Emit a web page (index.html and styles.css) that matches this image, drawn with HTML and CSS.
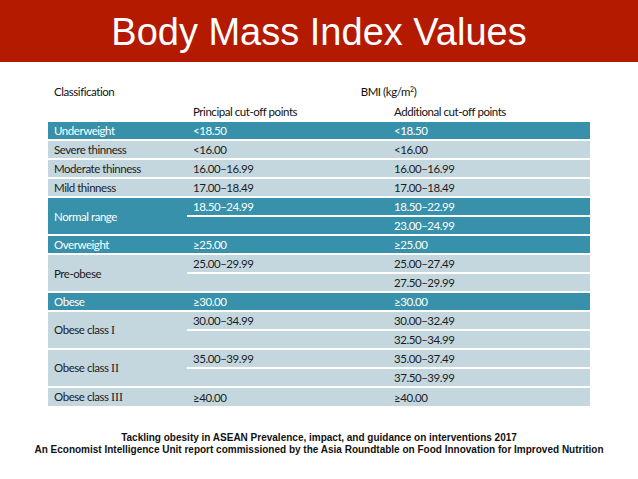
FILE: index.html
```html
<!DOCTYPE html>
<html lang="en">
<head>
<meta charset="utf-8">
<title>Body Mass Index Values</title>
<link rel="stylesheet" href="styles.css">
</head>
<body>
<header class="banner">
  <h1 class="title">Body Mass Index Values</h1>
</header>
<main class="content">
  <table class="bmi">
    <colgroup>
      <col class="c1"><col class="c2"><col class="c3">
    </colgroup>
    <thead>
      <tr class="h1">
        <th class="left">Classification</th>
        <th class="center" colspan="2">BMI (kg/m<sup>2</sup>)</th>
      </tr>
      <tr class="h2">
        <th></th>
        <th class="left">Principal cut-off points</th>
        <th class="left">Additional cut-off points</th>
      </tr>
    </thead>
    <tbody>
      <tr class="dark first"><td>Underweight</td><td>&lt;18.50</td><td>&lt;18.50</td></tr>
      <tr class="light"><td>Severe thinness</td><td>&lt;16.00</td><td>&lt;16.00</td></tr>
      <tr class="light"><td>Moderate thinness</td><td>16.00–16.99</td><td>16.00–16.99</td></tr>
      <tr class="light"><td>Mild thinness</td><td>17.00–18.49</td><td>17.00–18.49</td></tr>
      <tr class="dark"><td rowspan="2">Normal range</td><td>18.50–24.99</td><td>18.50–22.99</td></tr>
      <tr class="dark"><td></td><td>23.00–24.99</td></tr>
      <tr class="dark"><td>Overweight</td><td>≥25.00</td><td>≥25.00</td></tr>
      <tr class="light"><td rowspan="2">Pre-obese</td><td>25.00–29.99</td><td>25.00–27.49</td></tr>
      <tr class="light"><td></td><td>27.50–29.99</td></tr>
      <tr class="dark"><td>Obese</td><td>≥30.00</td><td>≥30.00</td></tr>
      <tr class="light"><td rowspan="2">Obese class <span class="roman">I</span></td><td>30.00–34.99</td><td>30.00–32.49</td></tr>
      <tr class="light"><td></td><td>32.50–34.99</td></tr>
      <tr class="light"><td rowspan="2">Obese class <span class="roman">II</span></td><td>35.00–39.99</td><td>35.00–37.49</td></tr>
      <tr class="light"><td></td><td>37.50–39.99</td></tr>
      <tr class="light"><td>Obese class <span class="roman">III</span></td><td>≥40.00</td><td>≥40.00</td></tr>
    </tbody>
  </table>
  <footer class="source">
    <p>Tackling obesity in ASEAN Prevalence, impact, and guidance on interventions 2017</p>
    <p>An Economist Intelligence Unit report commissioned by the Asia Roundtable on Food Innovation for Improved Nutrition</p>
  </footer>
</main>
</body>
</html>
```

FILE: styles.css
```css
html, body {
  margin: 0;
  padding: 0;
  background: #ffffff;
}

body {
  width: 638px;
  height: 479px;
  overflow: hidden;
  font-family: "Liberation Sans", Arial, sans-serif;
}

.banner {
  height: 62px;
  background: #b31a00;
  display: flex;
  align-items: center;
  justify-content: center;
}

.title {
  margin: 0;
  color: #ffffff;
  font-family: "Liberation Sans", Arial, sans-serif;
  font-weight: normal;
  font-size: 38px;
  line-height: 1;
  padding-top: 2px;
}

.content {
  padding-top: 20px;
}

.bmi {
  margin-left: 48px;
  width: 542px;
  border-collapse: separate;
  border-spacing: 0;
  table-layout: fixed;
  font-family: "Lato", "Open Sans", sans-serif;
  font-size: 11.5px;
  letter-spacing: -0.45px;
  color: #1c1c1c;
}

.c1 { width: 139px; }
.c2 { width: 201px; }
.c3 { width: 202px; }

.bmi th {
  font-weight: normal;
  padding: 0 0 0 6px;
  height: 20px;
  line-height: 20px;
  color: #111111;
}

.bmi th.left { text-align: left; }
.bmi th.center { text-align: center; padding-left: 0; }

.bmi sup {
  font-size: 7px;
  line-height: 0;
  vertical-align: 4px;
}

.bmi td {
  height: 17px;
  line-height: 17px;
  padding: 0 0 0 6px;
  border-top: 2px solid #ffffff;
  vertical-align: middle;
  white-space: nowrap;
}

.bmi tr.first td { border-top: 0; }

.bmi tr.dark td {
  background: #3891aa;
  color: #ffffff;
}

.bmi tr.light td {
  background: #c4d7df;
  color: #1c1c1c;
}

.roman {
  font-family: "Liberation Serif", "Times New Roman", serif;
  font-size: 12px;
  letter-spacing: 0;
}

.source {
  margin-top: 26px;
  text-align: center;
  font-family: "Liberation Sans", Arial, sans-serif;
  font-weight: bold;
  font-size: 10px;
  line-height: 12px;
  color: #111111;
}

.source p {
  margin: 0;
}
```
